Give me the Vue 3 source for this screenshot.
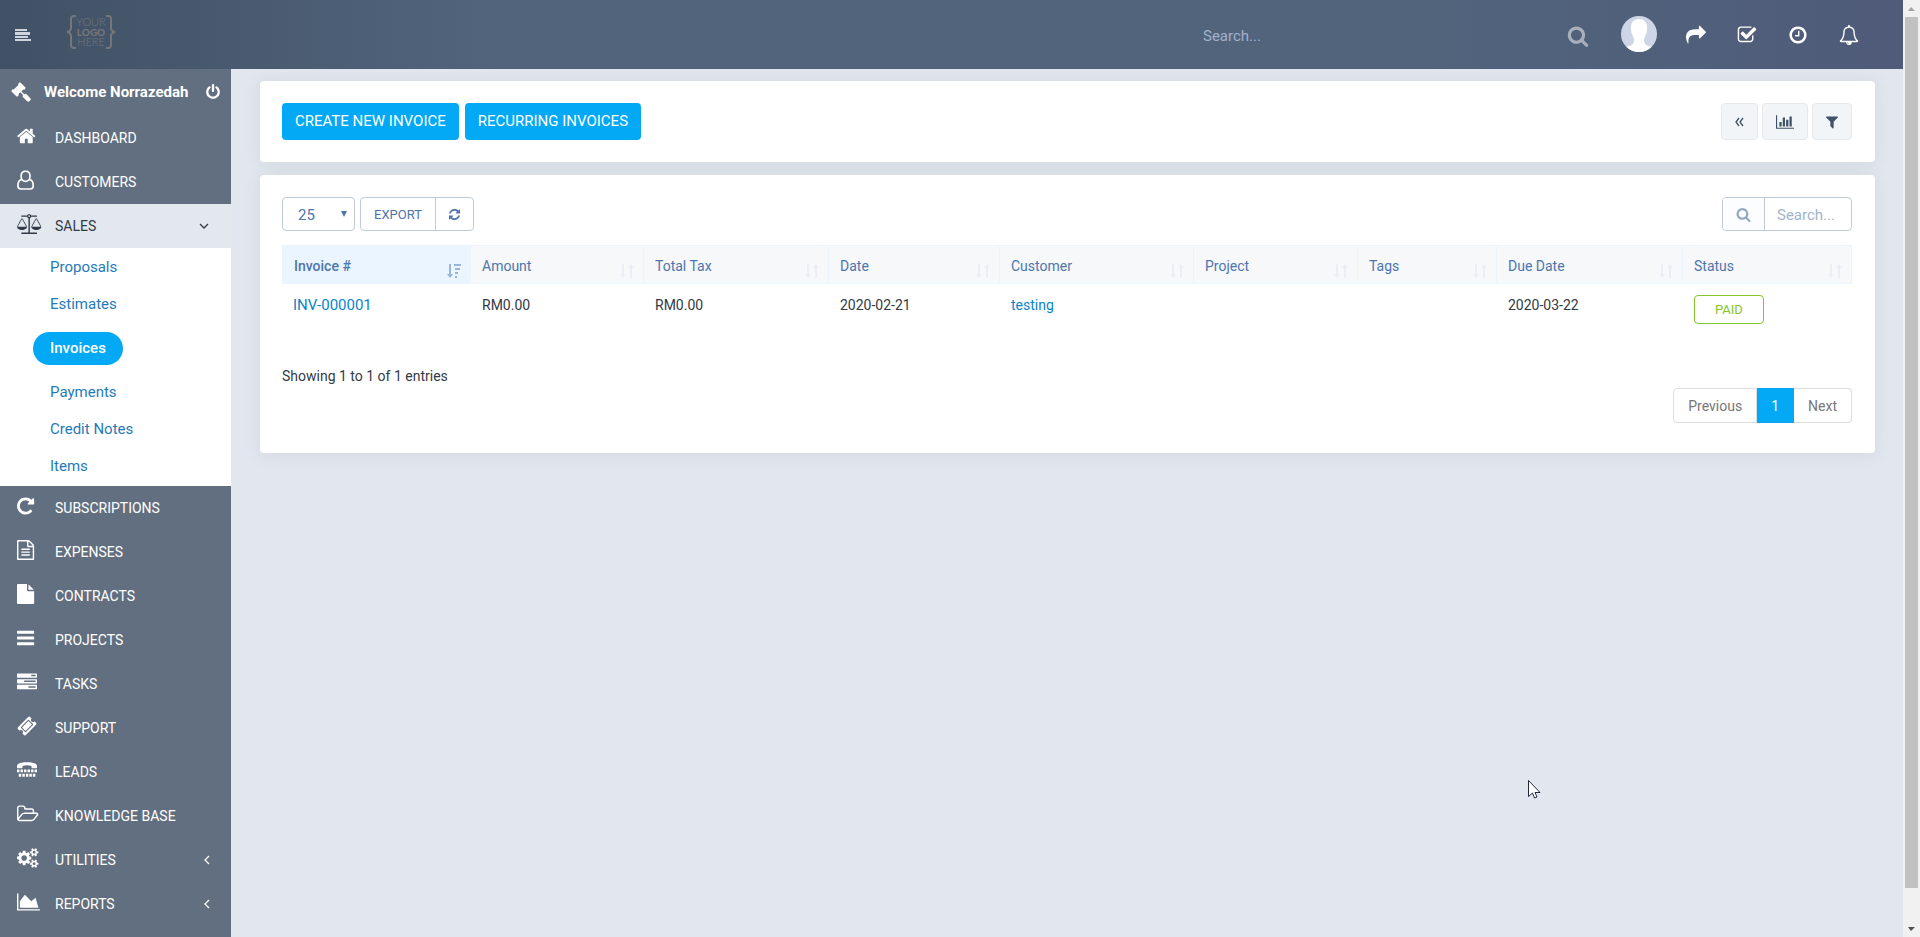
<script setup>
import { ref } from 'vue'

const icons = {
  gavel: { box: '0 0 1792 1792', d: 'M1771 1536q0 53-37 90l-107 108q-39 37-91 37-53 0-90-37l-363-364q-38-36-38-90 0-53 43-96l-256-256-126 126q-14 14-34 14t-34-14q2 2 12.5 12t12.5 13 10 11.5 10 13.5 6 13.5 5.5 16.5 1.5 18q0 38-28 68-3 3-16.5 18t-19 20.5-18.5 16.5-22 15.5-22 9-26 4.5q-40 0-68-28l-408-408q-28-28-28-68 0-13 4.5-26t9-22 15.5-22 16.5-18.5 20.5-19 18-16.5q30-28 68-28 10 0 18 1.5t16.5 5.5 13.5 6 13.5 10 11.5 10 13 12.5 12 12.5q-14-14-14-34t14-34l348-348q14-14 34-14t34 14q-2-2-12.5-12t-12.5-13-10-11.5-10-13.5-6-13.5-5.5-16.5-1.5-18q0-38 28-68 3-3 16.5-18t19-20.5 18.5-16.5 22-15.5 22-9 26-4.5q40 0 68 28l408 408q28 28 28 68 0 13-4.5 26t-9 22-15.5 22-16.5 18.5-20.5 19-18 16.5q-30 28-68 28-10 0-18-1.5t-16.5-5.5-13.5-6-13.5-10-11.5-10-13-12.5-12-12.5q14 14 14 34t-14 34l-126 126 256 256q43-43 96-43 52 0 91 37l363 363q37 39 37 91z' },
  power: { box: '128 0 1536 1792', d: 'M1664 896q0 156-61 298t-164 245-245 164-298 61-298-61-245-164-164-245-61-298q0-182 80.5-343t226.5-270q43-32 95.5-25t83.5 50q32 42 24.5 94.5t-49.5 84.5q-98 74-151.5 181t-53.5 228q0 104 40.5 198.5t109.5 163.5 163.5 109.5 198.5 40.5 198.5-40.5 163.5-109.5 109.5-163.5 40.5-198.5q0-121-53.5-228t-151.5-181q-42-32-49.5-84.5t24.5-94.5q31-43 84-50t95 25q146 109 226.5 270t80.5 343zm-640-768v640q0 52-38 90t-90 38-90-38-38-90v-640q0-52 38-90t90-38 90 38 38 90z' },
  home: { box: '64 0 1664 1792', d: 'M1472 992v480q0 26-19 45t-45 19h-384v-384h-256v384h-384q-26 0-45-19t-19-45v-480q0-1 .5-3t.5-3l575-474 575 474q1 2 1 6zm223-69l-62 74q-8 9-21 11h-3q-13 0-21-7l-692-577-692 577q-12 8-24 7-13-2-21-11l-62-74q-8-10-7-23.5t11-21.5l719-599q32-26 76-26t76 26l244 204v-195q0-14 9-23t23-9h192q14 0 23 9t9 23v408l219 182q10 8 11 21.5t-7 23.5z' },
  user: { box: '0 0 1536 1792', line: 150, d: 'M768 115c240 0 400 180 400 440s-170 460-400 460-400-200-400-460 160-440 400-440zM400 860C160 900 80 1180 80 1420c0 180 120 280 270 280h836c150 0 270-100 270-280 0-240-80-520-320-560' },
  scale: { box: '0 0 2176 1792', d: 'M1728 448l-384 704h768zm-1280 0l-384 704h768zm821-192q-14 40-45.5 71.5t-71.5 45.5v1291h608q14 0 23 9t9 23v64q0 14-9 23t-23 9h-1344q-14 0-23-9t-9-23v-64q0-14 9-23t23-9h608v-1291q-40-14-71.5-45.5t-45.5-71.5h-491q-14 0-23-9t-9-23v-64q0-14 9-23t23-9h491q21-57 70-92.5t111-35.5 111 35.5 70 92.5h491q14 0 23 9t9 23v64q0 14-9 23t-23 9h-491zm-181 16q33 0 56.5-23.5t23.5-56.5-23.5-56.5-56.5-23.5-56.5 23.5-23.5 56.5 23.5 56.5 56.5 23.5zm1088 880q0 73-46.5 131t-117.5 91-144.5 49.5-139.5 16.5-139.5-16.5-144.5-49.5-117.5-91-46.5-131q0-11 35-81t92-174.5 107-195.5 102-184 56-100q18-33 56-33t56 33q4 7 56 100t102 184 107 195.5 92 174.5 35 81zm-1280 0q0 73-46.5 131t-117.5 91-144.5 49.5-139.5 16.5-139.5-16.5-144.5-49.5-117.5-91-46.5-131q0-11 35-81t92-174.5 107-195.5 102-184 56-100q18-33 56-33t56 33q4 7 56 100t102 184 107 195.5 92 174.5 35 81z' },
  repeat: { box: '128 0 1536 1792', d: 'M1664 256v448q0 26-19 45t-45 19h-448q-42 0-59-40-17-39 14-69l138-138q-148-137-349-137-104 0-198.5 40.5t-163.5 109.5-109.5 163.5-40.5 198.5 40.5 198.5 109.5 163.5 163.5 109.5 198.5 40.5q119 0 225-52t179-147q7-10 23-12 15 0 25 9l137 138q9 8 9.5 20.5t-7.5 22.5q-109 132-264 204.5t-327 72.5q-156 0-298-61t-245-164-164-245-61-298 61-298 164-245 245-164 298-61q147 0 284.5 55.5t244.5 156.5l130-129q29-31 70-14 39 17 39 59z' },
  fileText: { box: '128 0 1536 1792', d: 'M1596 380q28 28 48 76t20 88v1152q0 40-28 68t-68 28h-1344q-40 0-68-28t-28-68v-1600q0-40 28-68t68-28h896q40 0 88 20t76 48zm-444-244v376h376q-10-29-22-41l-313-313q-12-12-41-22zm384 1528v-1024h-416q-40 0-68-28t-28-68v-416h-768v1536h1280zm-1024-864q0-14 9-23t23-9h704q14 0 23 9t9 23v64q0 14-9 23t-23 9h-704q-14 0-23-9t-9-23v-64zm736 224q14 0 23 9t9 23v64q0 14-9 23t-23 9h-704q-14 0-23-9t-9-23v-64q0-14 9-23t23-9h704zm0 256q14 0 23 9t9 23v64q0 14-9 23t-23 9h-704q-14 0-23-9t-9-23v-64q0-14 9-23t23-9h704z' },
  file: { box: '128 0 1536 1792', d: 'M1152 512v-472q22 14 36 28l408 408q14 14 28 36h-472zm-128 32q0 40 28 68t68 28h544v1056q0 40-28 68t-68 28h-1344q-40 0-68-28t-28-68v-1600q0-40 28-68t68-28h800v544z' },
  bars: { box: '128 0 1536 1792', d: 'M1664 1344v128q0 26-19 45t-45 19h-1408q-26 0-45-19t-19-45v-128q0-26 19-45t45-19h1408q26 0 45 19t19 45zm0-512v128q0 26-19 45t-45 19h-1408q-26 0-45-19t-19-45v-128q0-26 19-45t45-19h1408q26 0 45 19t19 45zm0-512v128q0 26-19 45t-45 19h-1408q-26 0-45-19t-19-45v-128q0-26 19-45t45-19h1408q26 0 45 19t19 45z' },
  tasks: { box: '0 0 1792 1792', d: 'M1024 1408h640v-128h-640v128zm-384-512h1024v-128h-1024v128zm640-512h384v-128h-384v128zm512 832v256q0 26-19 45t-45 19h-1664q-26 0-45-19t-19-45v-256q0-26 19-45t45-19h1664q26 0 45 19t19 45zm0-512v256q0 26-19 45t-45 19h-1664q-26 0-45-19t-19-45v-256q0-26 19-45t45-19h1664q26 0 45 19t19 45zm0-512v256q0 26-19 45t-45 19h-1664q-26 0-45-19t-19-45v-256q0-26 19-45t45-19h1664q26 0 45 19t19 45z' },
  ticket: { box: '0 0 1792 1792', d: 'M1024 452l316 316-572 572-316-316zm-211 979l618-618q19-19 19-45t-19-45l-362-362q-18-18-45-18t-45 18l-618 618q-19 19-19 45t19 45l362 362q18 18 45 18t45-18zm889-637l-907 908q-37 37-90.5 37t-90.5-37l-126-126q56-56 56-136t-56-136-136-56-136 56l-125-126q-37-37-37-90.5t37-90.5l907-906q37-37 90.5-37t90.5 37l125 125q-56 56-56 136t56 136 136 56 136-56l126 125q37 37 37 90.5t-37 90.5z' },
  tty: { box: '0 0 1792 1792', d: 'M0 560C0 340 300 210 896 210s896 130 896 350v110q0 60-60 60h-370q-60 0-60-60V530q-180-50-406-50t-406 50v140q0 60-60 60H60q-60 0-60-60zM0 850h220v250H0zM315 850h220v250H315zM630 850h220v250H630zM945 850h220v250H945zM1260 850h220v250h-220zM1575 850h217v250h-217zM160 1230h220v260H160zM480 1230h220v260H480zM800 1230h220v260H800zM1110 1230h220v260h-220zM1420 1230h220v260h-220z' },
  folder: { box: '64 0 1920 1792', d: 'M1845 931q0-35-53-35h-1088q-40 0-85.5 21.5t-71.5 52.5l-294 363q-18 24-18 40 0 35 53 35h1088q40 0 86-22t71-53l294-363q18-22 18-39zm-1141-163h768v-160q0-40-28-68t-68-28h-576q-40 0-68-28t-28-68v-64q0-40-28-68t-68-28h-320q-40 0-68 28t-28 68v853l256-315q44-53 116-87.5t140-34.5zm1269 163q0 62-46 120l-295 363q-43 53-116 87.5t-140 34.5h-1088q-92 0-158-66t-66-158v-960q0-92 66-158t158-66h320q92 0 158 66t66 158v32h544q92 0 158 66t66 158v160h192q54 0 99 24.5t67 70.5q15 32 15 68z' },
  cogs: { box: '0 0 1920 1792', d: 'M896 896q0-106-75-181t-181-75-181 75-75 181 75 181 181 75 181-75 75-181zm768 512q0-52-38-90t-90-38-90 38-38 90q0 53 37.5 90.5t90.5 37.5 90.5-37.5 37.5-90.5zm0-1024q0-52-38-90t-90-38-90 38-38 90q0 53 37.5 90.5t90.5 37.5 90.5-37.5 37.5-90.5zm-384 421v185q0 10-7 19.5t-16 10.5l-155 24q-11 35-32 76 34 48 90 115 7 11 7 20 0 12-7 19-23 30-82.5 89.5t-78.5 59.5q-11 0-21-7l-115-90q-37 19-77 31-11 108-23 155-7 24-30 24h-186q-11 0-20-7.5t-10-17.5l-23-153q-34-10-75-31l-118 89q-7 7-20 7-11 0-21-8-144-133-144-160 0-9 7-19 10-14 41-53t47-61q-23-44-35-82l-152-24q-10-1-17-9.5t-7-19.5v-185q0-10 7-19.5t16-10.5l155-24q11-35 32-76-34-48-90-115-7-11-7-20 0-12 7-20 22-30 82-89t79-59q11 0 21 7l115 90q34-18 77-32 11-108 23-154 7-24 30-24h186q11 0 20 7.5t10 17.5l23 153q34 10 75 31l118-89q8-7 20-7 11 0 21 8 144 133 144 160 0 8-7 19-12 16-42 54t-45 60q23 48 34 82l152 23q10 2 17 10.5t7 19.5zm640 533v140q0 16-149 31-12 27-30 52 51 113 51 138 0 4-4 7-122 71-124 71-8 0-46-47t-52-68q-20 2-30 2t-30-2q-14 21-52 68t-46 47q-2 0-124-71-4-3-4-7 0-25 51-138-18-25-30-52-149-15-149-31v-140q0-16 149-31 13-29 30-52-51-113-51-138 0-4 4-7 4-2 35-20t59-34 30-16q8 0 46 46.5t52 67.5q20-2 30-2t30 2q51-71 92-112l6-2q4 0 124 70 4 3 4 7 0 25-51 138 17 23 30 52 149 15 149 31zm0-1024v140q0 16-149 31-12 27-30 52 51 113 51 138 0 4-4 7-122 71-124 71-8 0-46-47t-52-68q-20 2-30 2t-30-2q-14 21-52 68t-46 47q-2 0-124-71-4-3-4-7 0-25 51-138-18-25-30-52-149-15-149-31v-140q0-16 149-31 13-29 30-52-51-113-51-138 0-4 4-7 4-2 35-20t59-34 30-16q8 0 46 46.5t52 67.5q20-2 30-2t30 2q51-71 92-112l6-2q4 0 124 70 4 3 4 7 0 25-51 138 17 23 30 52 149 15 149 31z' },
  area: { box: '0 0 2048 1792', d: 'M2048 1536v128h-2048v-1536h128v1408h1920zm-384-1024l256 896h-1664v-576l448-576 576 576z' },
  chart: { box: '0 0 2048 1792', d: 'M640 896v512h-256v-512h256zm384-512v1024h-256v-1024h256zm1024 1152v128h-2048v-1536h128v1408h1920zm-640-896v768h-256v-768h256zm384-384v1152h-256v-1152h256z' },
  filter: { box: '192 0 1408 1792', d: 'M1595 295q17 41-14 70l-493 493v742q0 42-39 59-13 5-25 5-27 0-45-19l-256-256q-19-19-19-45v-486l-493-493q-31-29-14-70 17-39 59-39h1280q42 0 59 39z' },
  refresh: { box: '0 0 1792 1792', d: 'M1639 1056q0 5-1 7-64 268-268 434.5t-478 166.5q-146 0-282.5-55t-243.5-157l-129 129q-19 19-45 19t-45-19-19-45v-448q0-26 19-45t45-19h448q26 0 45 19t19 45-19 45l-137 137q71 66 161 102t187 36q134 0 250-65t186-179q11-17 53-117 8-23 30-23h192q13 0 22.5 9.5t9.5 22.5zm25-800v448q0 26-19 45t-45 19h-448q-26 0-45-19t-19-45 19-45l138-138q-148-137-349-137-134 0-250 65t-186 179q-11 17-53 117-8 23-30 23h-199q-13 0-22.5-9.5t-9.5-22.5v-7q65-268 270-434.5t480-166.5q146 0 284 55.5t245 156.5l130-129q19-19 45-19t45 19 19 45z' },
  search: { box: '0 0 1792 1792', d: 'M1216 832q0-185-131.5-316.5t-316.5-131.5-316.5 131.5-131.5 316.5 131.5 316.5 316.5 131.5 316.5-131.5 131.5-316.5zm512 832q0 52-38 90t-90 38q-54 0-90-38l-343-342q-179 124-399 124-143 0-273.5-55.5t-225-150-150-225-55.5-273.5 55.5-273.5 150-225 225-150 273.5-55.5 273.5 55.5 225 150 150 225 55.5 273.5q0 220-124 399l343 343q37 37 37 90z' },
  share: { box: '0 0 1792 1792', d: 'M1792 640q0 26-19 45l-512 512q-19 19-45 19t-45-19-19-45v-256h-224q-98 0-175.5 6t-154 21.5-133 42.5-105.5 69.5-80 101-48.5 138.5-17.5 181q0 55 5 123 0 6 2.5 23.5t2.5 26.5q0 15-8.5 25t-23.5 10q-16 0-28-17-7-9-13-22t-13.5-30-10.5-24q-127-285-127-451 0-199 53-333 162-403 875-403h224v-256q0-26 19-45t45-19 45 19l512 512q19 19 19 45z' },
  check: { box: '0 0 1792 1792', d: 'M1472 930v318q0 119-84.5 203.5t-203.5 84.5h-832q-119 0-203.5-84.5t-84.5-203.5v-832q0-119 84.5-203.5t203.5-84.5h832q63 0 117 25 15 7 18 23 3 17-9 29l-49 49q-10 10-23 10-3 0-9-2-23-6-45-6h-832q-66 0-113 47t-47 113v832q0 66 47 113t113 47h832q66 0 113-47t47-113v-254q0-13 9-22l64-64q10-10 23-10 6 0 12 3 20 8 20 29zm231-489l-814 814q-24 24-57 24t-57-24l-430-430q-24-24-24-57t24-57l110-110q24-24 57-24t57 24l263 263 647-647q24-24 57-24t57 24l110 110q24 24 24 57t-24 57z' },
  clock: { box: '0 0 1792 1792', d: 'M1024 544v448q0 14-9 23t-23 9h-320q-14 0-23-9t-9-23v-64q0-14 9-23t23-9h224v-352q0-14 9-23t23-9h64q14 0 23 9t9 23zm416 352q0-148-73-273t-198-198-273-73-273 73-198 198-73 273 73 273 198 198 273 73 273-73 198-198 73-273zm224 0q0 209-103 385.5t-279.5 279.5-385.5 103-385.5-103-279.5-279.5-103-385.5 103-385.5 279.5-279.5 385.5-103 385.5 103 279.5 279.5 103 385.5z' },
  bell: { box: '0 0 1792 1792', d: 'M912 1696q0-16-16-16-59 0-101.5-42.5t-42.5-101.5q0-16-16-16t-16 16q0 73 51.5 124.5t124.5 51.5q16 0 16-16zm-666-288h1300q-266-300-266-832 0-51-24-105t-69-103-121.5-80.5-169.5-31.5-169.5 31.5-121.5 80.5-69 103-24 105q0 532-266 832zm1482 0q0 52-38 90t-90 38h-448q0 106-75 181t-181 75-181-75-75-181h-448q-52 0-90-38t-38-90q50-42 91-88t85-119.5 74.5-158.5 50-206 19.5-260q0-152 117-282.5t307-158.5q-8-19-8-39 0-40 28-68t68-28 68 28 28 68q0 20-8 39 190 28 307 158.5t117 282.5q0 139 19.5 260t50 206 74.5 158.5 85 119.5 91 88z' }
}

const menu = [
  { label: 'DASHBOARD', icon: 'home' },
  { label: 'CUSTOMERS', icon: 'user' },
  {
    label: 'SALES',
    icon: 'scale',
    open: true,
    children: ['Proposals', 'Estimates', 'Invoices', 'Payments', 'Credit Notes', 'Items']
  },
  { label: 'SUBSCRIPTIONS', icon: 'repeat' },
  { label: 'EXPENSES', icon: 'fileText' },
  { label: 'CONTRACTS', icon: 'file' },
  { label: 'PROJECTS', icon: 'bars' },
  { label: 'TASKS', icon: 'tasks' },
  { label: 'SUPPORT', icon: 'ticket' },
  { label: 'LEADS', icon: 'tty' },
  { label: 'KNOWLEDGE BASE', icon: 'folder' },
  { label: 'UTILITIES', icon: 'cogs', more: true },
  { label: 'REPORTS', icon: 'area', more: true }
]
const activeChild = 'Invoices'

const headerActions = [
  { label: 'Share', icon: 'share' },
  { label: 'To do', icon: 'check' },
  { label: 'Timers', icon: 'clock' },
  { label: 'Notifications', icon: 'bell' }
]

const columns = [
  { label: 'Invoice #', weight: 189 },
  { label: 'Amount', weight: 173 },
  { label: 'Total Tax', weight: 185 },
  { label: 'Date', weight: 171 },
  { label: 'Customer', weight: 194 },
  { label: 'Project', weight: 164 },
  { label: 'Tags', weight: 139 },
  { label: 'Due Date', weight: 186 },
  { label: 'Status', weight: 169 }
]
const totalWeight = columns.reduce((sum, c) => sum + c.weight, 0)

const invoices = [
  { number: 'INV-000001', amount: 'RM0.00', tax: 'RM0.00', date: '2020-02-21', customer: 'testing', project: '', tags: '', due: '2020-03-22', status: 'PAID' }
]

const pageSize = ref('25')
</script>

<template>
  <div class="window">
    <div class="app">
      <header class="header">
        <button class="toggle" type="button" aria-label="Toggle menu">
          <svg viewBox="0 0 16 12" width="16" height="12"><path d="M0 0h12v2H0zM0 3h15v3H0zM0 7h13v2H0zM0 10h16v2H0z" /></svg>
        </button>
        <a class="logo" href="#" aria-label="Home">
          <svg viewBox="0 0 50 36" width="50" height="36">
            <path d="M10 2H8Q5 2 5 5v9q0 3-4 4 4 1 4 4v9q0 3 3 3h2M40 2h2q3 0 3 3v9q0 3 4 4-4 1-4 4v9q0 3-3 3h-2" />
            <text class="thin" x="25" y="12">YOUR</text>
            <text class="thick" x="25" y="22">LOGO</text>
            <text class="thin" x="25" y="32">HERE</text>
          </svg>
        </a>
        <form class="top-search" @submit.prevent>
          <input type="text" placeholder="Search..." aria-label="Search everything">
          <button type="submit" aria-label="Search"><svg :viewBox="icons.search.box" width="22" height="22"><path :d="icons.search.d" /></svg></button>
        </form>
        <a class="avatar" href="#" aria-label="Profile">
          <svg viewBox="0 0 36 36" width="36" height="36">
            <defs><clipPath id="face"><circle cx="18" cy="18" r="18" /></clipPath></defs>
            <g clip-path="url(#face)">
              <rect width="36" height="36" fill="#cdd5e6" />
              <path fill="#fff" d="M18 3c5 0 8 3 8 8 0 3 0 5-1 7-1 3-2 4-2 6 0 5 3 6 12 8v5H1v-5c9-2 12-3 12-8 0-2-1-3-2-6-1-2-1-4-1-7 0-5 3-8 8-8z" />
            </g>
          </svg>
        </a>
        <button v-for="a in headerActions" :key="a.label" class="action" type="button" :aria-label="a.label">
          <svg :viewBox="icons[a.icon].box" width="20" height="20"><path :d="icons[a.icon].d" /></svg>
        </button>
      </header>

      <div class="body">
        <nav class="sidebar">
          <div class="welcome">
            <svg :viewBox="icons.gavel.box" width="20" height="20"><path :d="icons.gavel.d" /></svg>
            <span>Welcome Norrazedah</span>
            <a class="logout" href="#" aria-label="Log out"><svg :viewBox="icons.power.box" width="14" height="16"><path :d="icons.power.d" /></svg></a>
          </div>
          <template v-for="item in menu" :key="item.label">
            <a class="item" :class="{ open: item.open }" href="#">
              <svg class="item-icon" :viewBox="icons[item.icon].box" preserveAspectRatio="xMinYMid">
                <path :class="{ outline: icons[item.icon].line }" :stroke-width="icons[item.icon].line" :d="icons[item.icon].d" />
              </svg>
              <span>{{ item.label }}</span>
              <svg v-if="item.open" class="arrow" viewBox="0 0 10 10" width="10" height="10"><path d="M1 3l4 4 4-4" /></svg>
              <svg v-if="item.more" class="arrow left" viewBox="0 0 10 10" width="10" height="10"><path d="M7 1L3 5l4 4" /></svg>
            </a>
            <ul v-if="item.children" class="submenu">
              <li v-for="child in item.children" :key="child">
                <a href="#" :class="{ active: child === activeChild }">{{ child }}</a>
              </li>
            </ul>
          </template>
        </nav>

        <main class="content">
          <section class="card toolbar">
            <a class="primary" href="#">CREATE NEW INVOICE</a>
            <a class="primary" href="#">RECURRING INVOICES</a>
            <div class="tools">
              <button class="tool" type="button" aria-label="Toggle table">
                <svg class="double" viewBox="0 0 9 10" width="9" height="10"><path d="M4 1L1 5l3 4M8 1L5 5l3 4" /></svg>
              </button>
              <button class="tool" type="button" aria-label="Statistics"><svg :viewBox="icons.chart.box" width="18" height="16"><path :d="icons.chart.d" /></svg></button>
              <button class="tool" type="button" aria-label="Filter"><svg :viewBox="icons.filter.box" width="12" height="16"><path :d="icons.filter.d" /></svg></button>
            </div>
          </section>

          <section class="card">
            <div class="controls">
              <div class="select">
                <select v-model="pageSize" aria-label="Entries per page">
                  <option>10</option>
                  <option>25</option>
                  <option>50</option>
                </select>
                <svg viewBox="0 0 6 6" width="6" height="6"><path d="M0 0h6L3 6z" /></svg>
              </div>
              <div class="group">
                <button type="button">EXPORT</button>
                <button type="button" aria-label="Reload"><svg :viewBox="icons.refresh.box" width="13" height="13"><path :d="icons.refresh.d" /></svg></button>
              </div>
              <label class="table-search">
                <span class="addon"><svg :viewBox="icons.search.box" width="15" height="15"><path :d="icons.search.d" /></svg></span>
                <input type="search" placeholder="Search..." aria-label="Search invoices">
              </label>
            </div>

            <table>
              <colgroup>
                <col v-for="c in columns" :key="c.label" :style="{ width: (c.weight / totalWeight) * 100 + '%' }">
              </colgroup>
              <thead>
                <tr>
                  <th v-for="(c, i) in columns" :key="c.label" scope="col" :class="{ sorted: i === 0 }">
                    <div class="head">
                      <span>{{ c.label }}</span>
                      <svg v-if="i === 0" viewBox="0 0 14 14" width="14" height="14"><path d="M2 0h2v10h2l-3 4-3-4h2zM7 0h7v2H7zM8 4h5v2H8zM8 8h3v2H8zM8 12h2v2H8z" /></svg>
                      <svg v-else viewBox="0 0 14 14" width="14" height="14"><path d="M2 0h2v10h2l-3 4-3-4h2zM11 0l3 4h-2v10h-2V4H8z" /></svg>
                    </div>
                  </th>
                </tr>
              </thead>
              <tbody>
                <tr v-for="inv in invoices" :key="inv.number">
                  <td class="number"><a href="#">{{ inv.number }}</a></td>
                  <td>{{ inv.amount }}</td>
                  <td>{{ inv.tax }}</td>
                  <td>{{ inv.date }}</td>
                  <td><a href="#">{{ inv.customer }}</a></td>
                  <td>{{ inv.project }}</td>
                  <td>{{ inv.tags }}</td>
                  <td>{{ inv.due }}</td>
                  <td><span class="badge">{{ inv.status }}</span></td>
                </tr>
              </tbody>
            </table>

            <p class="info">Showing 1 to 1 of 1 entries</p>
            <div class="pages">
              <a href="#">Previous</a>
              <a class="current" href="#">1</a>
              <a href="#">Next</a>
            </div>
          </section>
        </main>
      </div>
    </div>

    <div class="scroll" aria-hidden="true">
      <svg viewBox="0 0 17 17" width="17" height="17"><path fill="#a3a3a3" d="M5 11h7L8 7z" /></svg>
      <div class="thumb"></div>
      <svg class="down" viewBox="0 0 17 17" width="17" height="17"><path fill="#505050" d="M5 7h7l-4 4z" /></svg>
    </div>

    <svg class="pointer" viewBox="0 0 13 20" width="13" height="20" aria-hidden="true">
      <path d="M.5 .5v16l4-3.500L6.500 18l2.500-1-2-4.500h5z" />
    </svg>
  </div>
</template>

<style>
body {
  margin: 0;
  background: #e2e7ef;
}
</style>

<style scoped>
* {
  box-sizing: border-box;
}
.window {
  position: relative;
  display: flex;
  min-height: 100vh;
  font-family: Roboto, "Liberation Sans", sans-serif;
  font-size: 14px;
  line-height: 20px;
  color: #323a45;
}
a {
  text-decoration: none;
  color: #0a84c8;
}
button,
input,
select {
  font: inherit;
  border: 0;
  margin: 0;
  padding: 0;
  background: none;
  outline: none;
}
svg {
  display: block;
  flex: none;
  fill: currentColor;
}
.app {
  flex: 1;
  min-width: 0;
  display: flex;
  flex-direction: column;
}
.header {
  height: 69px;
  display: flex;
  align-items: center;
  padding-right: 29px;
  color: #fff;
  background: linear-gradient(to right, #415165 0%, #51647c 26%, #51647c 75%, #4f5b79 100%);
}
.toggle {
  color: #d0d4dd;
  padding: 8px 15px;
}
.logo {
  margin-left: 20px;
  margin-bottom: 5px;
  color: #73767b;
}
.logo path {
  fill: none;
  stroke: currentColor;
  stroke-width: 2;
}
.logo text {
  font-family: Lato, sans-serif;
  font-size: 11px;
  text-anchor: middle;
}
.logo .thin {
  font-weight: 300;
}
.logo .thick {
  font-weight: 900;
  font-size: 10px;
}
.top-search {
  margin-left: auto;
  width: 386px;
  display: flex;
  align-items: center;
  padding-top: 3px;
}
.top-search input {
  flex: 1;
  min-width: 0;
  color: #fff;
  font-size: 15px;
}
.top-search input::placeholder {
  color: #a3b1cb;
  opacity: 1;
}
.top-search button {
  color: #a9afbd;
}
.avatar {
  margin: 0 13px 2px 32px;
}
.action {
  width: 51px;
  height: 36px;
  display: flex;
  align-items: center;
  justify-content: center;
  color: #fff;
}
.body {
  flex: 1;
  display: flex;
}
.sidebar {
  width: 231px;
  flex: none;
  color: #fff;
  background: #626f80;
}
.welcome {
  height: 47px;
  display: flex;
  align-items: center;
  padding: 0 11px 2px;
  font-size: 15px;
  font-weight: 700;
}
.welcome span {
  margin-left: 13px;
}
.welcome .logout {
  margin-left: auto;
  color: #fff;
}
.item {
  height: 44px;
  display: flex;
  align-items: center;
  padding: 0 20px 0 17px;
  color: #fff;
}
.item-icon {
  width: 26px;
  height: 20px;
  margin-right: 12px;
  margin-bottom: 4px;
}
.outline {
  fill: none;
  stroke: currentColor;
}
.item.open {
  color: #323a45;
  background: #e3e8ee;
}
.arrow {
  margin-left: auto;
  margin-right: 2px;
}
.arrow path,
.double path {
  fill: none;
  stroke: currentColor;
  stroke-width: 1.3;
}
.arrow.left {
  margin-right: -1px;
}
.submenu {
  margin: 0;
  padding: 1px 0;
  list-style: none;
  background: #fff;
}
.submenu li {
  padding-left: 33px;
}
.submenu a {
  display: inline-block;
  vertical-align: top;
  padding: 0 17px;
  font-size: 15px;
  line-height: 37px;
  color: #1f7abc;
}
.submenu .active {
  margin: 9px 0;
  line-height: 33px;
  border-radius: 17px;
  color: #fff;
  font-weight: 500;
  background: #03a9f4;
}
.content {
  flex: 1;
  min-width: 0;
  padding: 12px 28px 12px 29px;
}
.card {
  padding: 22px 23px 22px 22px;
  border-radius: 4px;
  background: #fff;
  box-shadow: 0 1px 15px 1px rgba(90, 100, 90, 0.1);
}
.card + .card {
  margin-top: 13px;
  padding-bottom: 30px;
}
.toolbar {
  display: flex;
  gap: 6px;
}
.primary {
  height: 37px;
  padding: 0 13px;
  border-radius: 4px;
  font-size: 15px;
  line-height: 36px;
  color: #fff;
  background: #03a9f4;
}
.tools {
  display: flex;
  gap: 4px;
  margin-left: auto;
}
.tool {
  height: 37px;
  padding: 0 13px;
  border: 1px solid #e6e9eb;
  border-radius: 4px;
  color: #415165;
  background: #f1f5f8;
}
.controls {
  display: flex;
  gap: 5px;
  height: 34px;
}
.select {
  position: relative;
  width: 73px;
  color: #4e75ad;
}
.select select {
  width: 100%;
  height: 100%;
  padding: 1px 0 0 15px;
  border: 1px solid #bfcbd9;
  border-radius: 4px;
  appearance: none;
  font-size: 15px;
  color: inherit;
}
.select svg {
  position: absolute;
  right: 8px;
  top: 14px;
  pointer-events: none;
}
.group {
  display: flex;
  border: 1px solid #bfcbd9;
  border-radius: 4px;
}
.group button {
  padding: 1px 13px 0;
  font-size: 13px;
  color: #4e75ad;
}
.group button + button {
  padding: 0 12px;
  border-left: 1px solid #bfcbd9;
}
.table-search {
  display: flex;
  width: 130px;
  margin-left: auto;
  border: 1px solid #bfcbd9;
  border-radius: 4px;
  overflow: hidden;
}
.addon {
  width: 42px;
  display: flex;
  align-items: center;
  justify-content: center;
  border-right: 1px solid #bfcbd9;
  color: #92a8c6;
  background: #fbfdff;
}
.table-search input {
  flex: 1;
  min-width: 0;
  padding: 1px 0 0 12px;
  font-size: 15px;
}
.table-search input::placeholder {
  color: #a1b4cc;
  opacity: 1;
}
table {
  width: 100%;
  margin-top: 14px;
  table-layout: fixed;
  border-collapse: separate;
  border-spacing: 0;
}
th {
  height: 39px;
  padding: 0 9px 0 11px;
  border: 1px solid #ebf5ff;
  border-left-width: 0;
  text-align: left;
  font-weight: 400;
  color: #4e75ad;
  background: #f6f8fa;
}
th.sorted {
  padding-left: 12px;
  font-weight: 500;
  background: #ebf5ff;
}
.head {
  display: flex;
  justify-content: space-between;
  align-items: center;
  height: 26px;
}
.head span {
  padding-top: 3px;
}
.head svg {
  align-self: flex-end;
  color: #ebeef5;
}
.sorted .head svg {
  color: #9ab5da;
}
td {
  padding: 11px;
  line-height: 20px;
  vertical-align: top;
}
.number {
  font-size: 15px;
}
.badge {
  display: inline-block;
  padding: 0 20px;
  border: 1px solid #84c529;
  border-radius: 4px;
  font-size: 13px;
  line-height: 27px;
  color: #84c529;
}
.info {
  margin: 31px 0 0;
}
.pages {
  display: flex;
  justify-content: flex-end;
  height: 35px;
  margin-top: 2px;
}
.pages a {
  padding: 0 14px;
  border: 1px solid #ddd;
  border-left-width: 0;
  line-height: 34px;
  color: #777;
}
.pages a:first-child {
  border-left-width: 1px;
  border-radius: 4px 0 0 4px;
}
.pages a:last-child {
  border-radius: 0 4px 4px 0;
}
.pages .current {
  border-color: #03a9f4;
  color: #fff;
  background: #03a9f4;
}
.scroll {
  width: 17px;
  flex: none;
  display: flex;
  flex-direction: column;
  background: #f1f1f1;
}
.thumb {
  flex: none;
  height: 93vh;
  margin: 0 2px;
  background: #c1c1c1;
}
.scroll .down {
  margin-top: auto;
}
.pointer {
  position: absolute;
  left: 1528px;
  top: 780px;
  pointer-events: none;
}
.pointer path {
  fill: #fff;
  stroke: #222a3a;
  stroke-width: 1;
}
</style>
